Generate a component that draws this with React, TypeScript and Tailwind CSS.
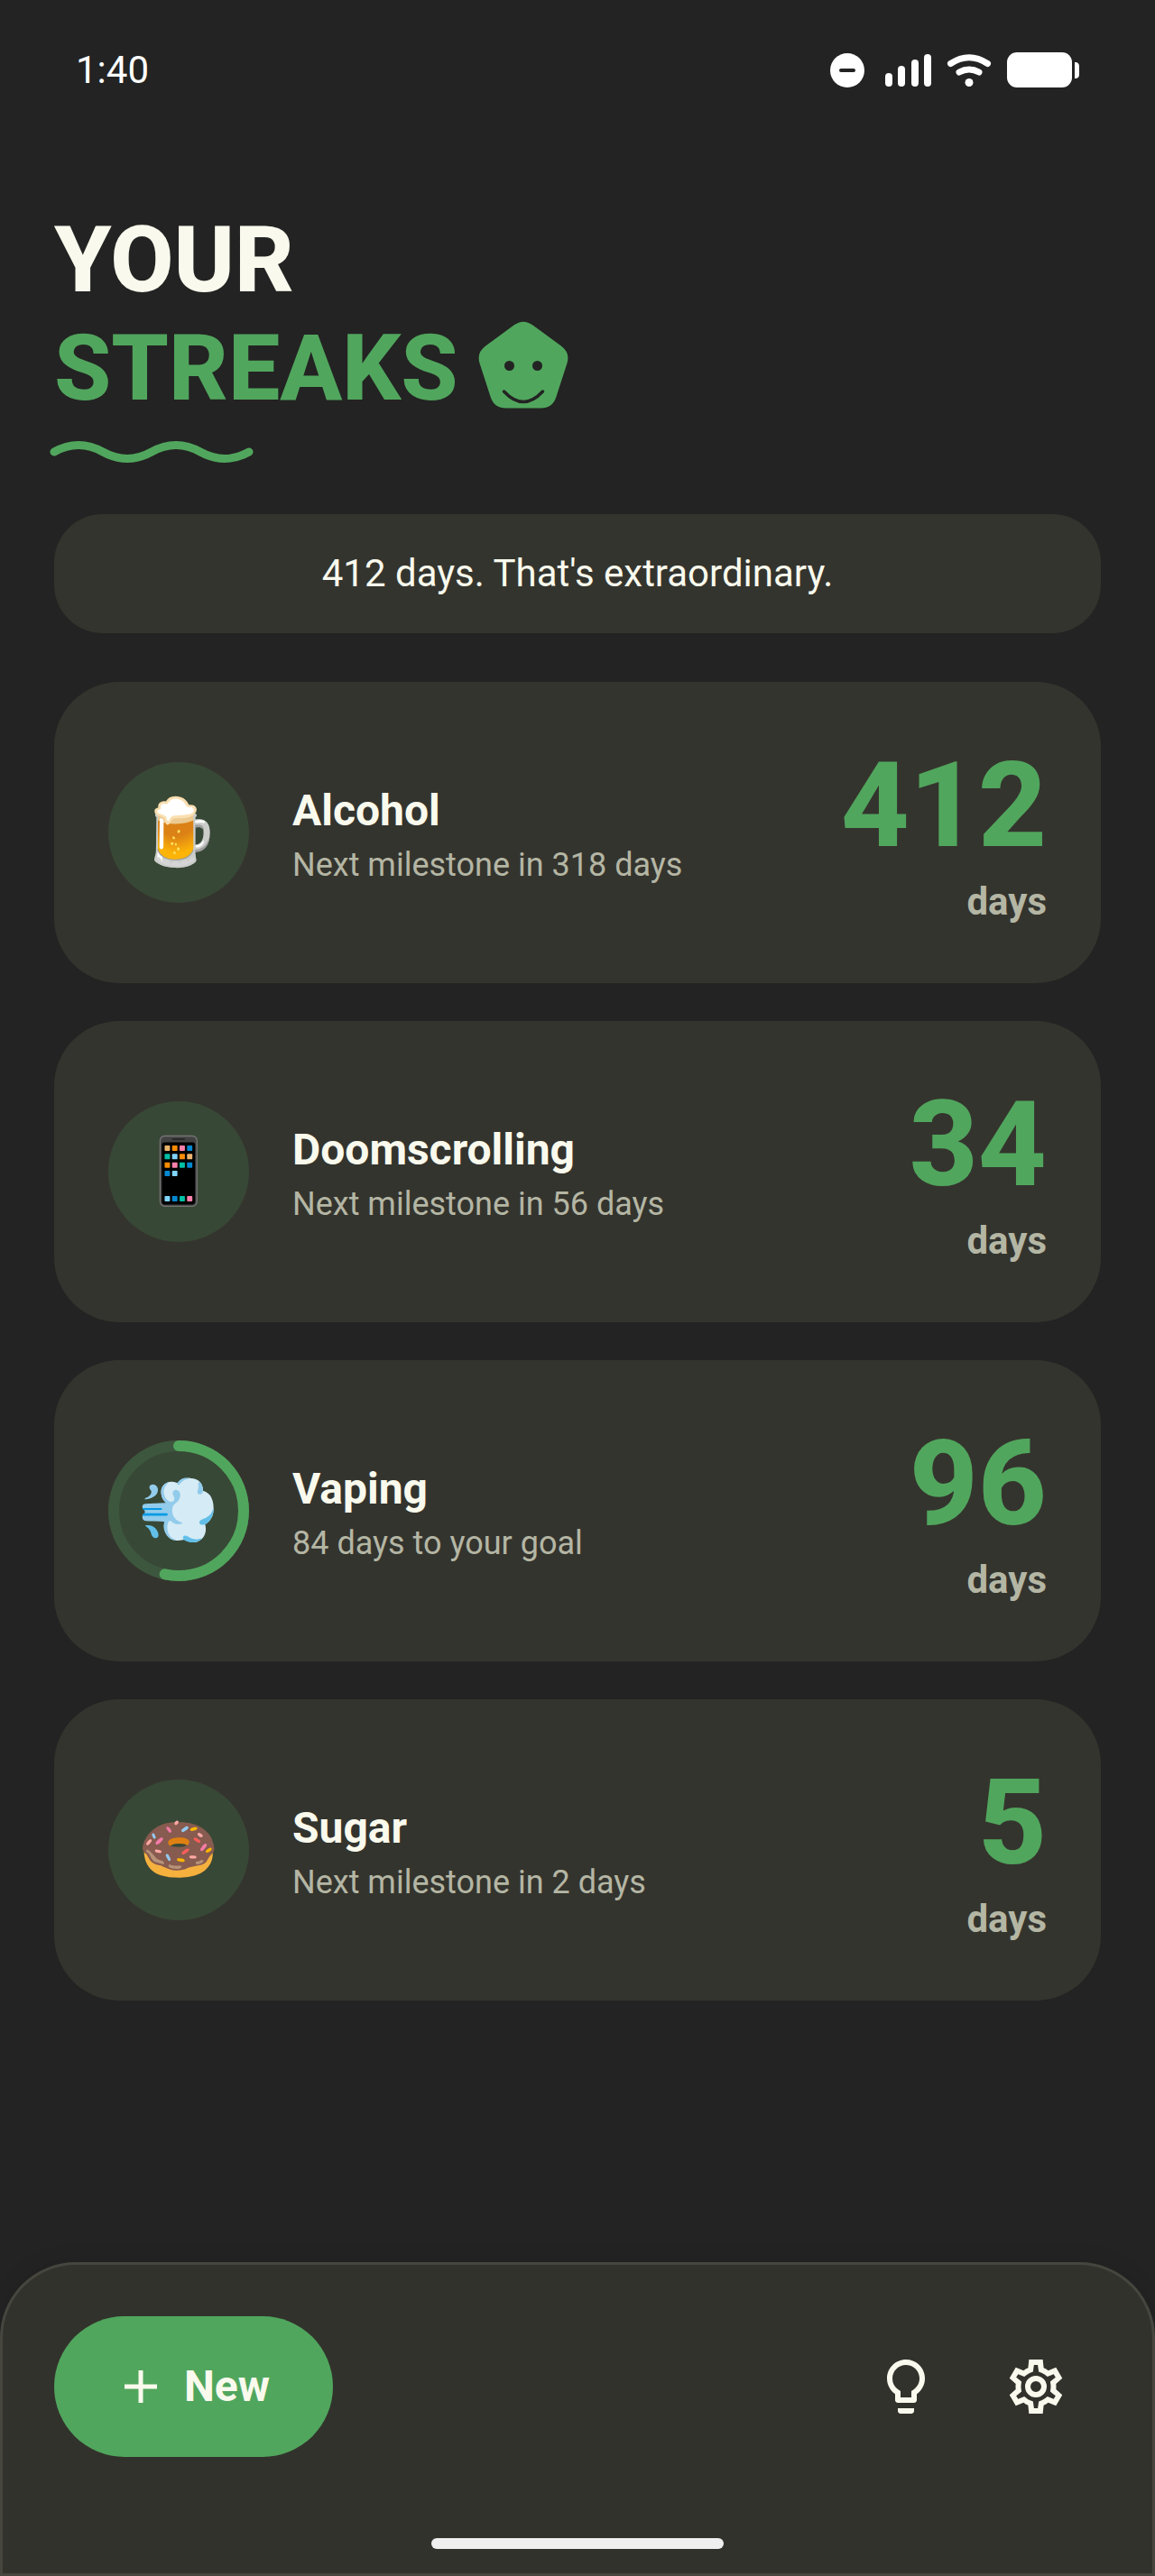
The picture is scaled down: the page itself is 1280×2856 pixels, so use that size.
type Habit = {
  name: string;
  note: string;
  days: number;
  emoji: string;
  progress?: number;
};

const habits: Habit[] = [
  { name: "Alcohol", note: "Next milestone in 318 days", days: 412, emoji: "🍺" },
  { name: "Doomscrolling", note: "Next milestone in 56 days", days: 34, emoji: "📱" },
  { name: "Vaping", note: "84 days to your goal", days: 96, emoji: "💨", progress: 96 / 180 },
  { name: "Sugar", note: "Next milestone in 2 days", days: 5, emoji: "🍩" },
];

function StatusBar() {
  return (
    <div className="flex h-39 items-center justify-between px-21 text-white">
      <span className="text-[42px] leading-none">1:40</span>
      <svg viewBox="0 0 276 40" className="h-10 w-69" fill="currentColor" aria-hidden="true">
        <circle cx="19" cy="20" r="19" />
        <path d="M12 20h14" stroke="#232323" strokeWidth="4" strokeLinecap="round" />
        <rect x="61" y="23" width="8" height="15" rx="4" />
        <rect x="75" y="15" width="8" height="23" rx="4" />
        <rect x="90" y="8" width="8" height="30" rx="4" />
        <rect x="104" y="2" width="8" height="36" rx="4" />
        <g fill="none" stroke="currentColor" strokeWidth="7" strokeLinecap="round">
          <path d="M133.5 12.5Q154 -1 174.5 12.5" />
          <path d="M143 22Q154 16 165 22" />
        </g>
        <circle cx="154" cy="33.5" r="4.5" />
        <rect x="196" y="0" width="72" height="39" rx="11" />
        <path d="M271 11c4 0 5 2 5 5v8c0 3-1 5-5 5z" />
      </svg>
    </div>
  );
}

function Face() {
  return (
    <svg viewBox="0 0 108 108" className="size-27" aria-hidden="true">
      <path
        d="M43.5 6.6Q54 -1 64.5 6.6L95.8 29.4Q106.3 37 102.3 49.3L90.3 86.2Q86.3 98.5 73.3 98.5H34.7Q21.7 98.5 17.7 86.2L5.7 49.3Q1.7 37 12.2 29.4Z"
        fill="#51a65d"
      />
      <circle cx="38.5" cy="51.5" r="5.5" fill="#232323" />
      <circle cx="69.5" cy="51.5" r="5.5" fill="#232323" />
      <path d="M32.5 80Q54 103 75.5 80" fill="none" stroke="#232323" strokeWidth="3.5" strokeLinecap="round" />
    </svg>
  );
}

function HabitIcon({ habit }: { habit: Habit }) {
  const length = 2 * Math.PI * 72;
  return (
    <div className="relative flex size-39 shrink-0 items-center justify-center rounded-full bg-[#384836]">
      {habit.progress !== undefined && (
        <svg viewBox="0 0 156 156" className="absolute inset-0 -rotate-90" fill="none" strokeWidth="12" aria-hidden="true">
          <circle cx="78" cy="78" r="72" stroke="#3d573e" />
          <circle
            cx="78"
            cy="78"
            r="72"
            stroke="#51a65d"
            strokeLinecap="round"
            strokeDasharray={`${length * habit.progress} ${length}`}
          />
        </svg>
      )}
      <span className="text-[72px] leading-none">{habit.emoji}</span>
    </div>
  );
}

function HabitCard({ habit }: { habit: Habit }) {
  return (
    <li className="flex items-center gap-12 rounded-[72px] bg-[#34342e] p-15">
      <HabitIcon habit={habit} />
      <div className="min-w-0 flex-1">
        <h2 className="text-[48px] leading-[72px] font-bold">{habit.name}</h2>
        <p className="text-[36px] leading-[48px] text-[#b4b6a4]">{habit.note}</p>
      </div>
      <div className="text-right">
        <p className="text-[132px] leading-[154px] font-extrabold text-[#51a65d]">{habit.days}</p>
        <p className="text-[42px] leading-[60px] font-bold text-[#b4b6a4]">days</p>
      </div>
    </li>
  );
}

export default function App() {
  return (
    <div className="flex min-h-screen flex-col bg-[#232323] font-[Roboto,sans-serif] text-[#f9faed]">
      <StatusBar />

      <main className="px-15 pt-18">
        <h1 className="text-[102px] leading-[120px] font-extrabold">
          YOUR
          <span className="flex items-center gap-[18px] text-[#51a65d]">
            STREAKS
            <Face />
          </span>
        </h1>
        <svg viewBox="0 0 216 36" className="mt-4 h-9 w-54 overflow-visible" aria-hidden="true">
          <path
            d="M0 17Q27 2 54 17T108 17T162 17T216 17"
            fill="none"
            stroke="#51a65d"
            strokeWidth="9"
            strokeLinecap="round"
          />
        </svg>

        <p className="mt-[50px] rounded-[54px] bg-[#34342e] py-9 text-center text-[42px] leading-[60px]">
          412 days. That's extraordinary.
        </p>

        <ul className="mt-[54px] mb-12 flex flex-col gap-[42px]">
          {habits.map((habit) => (
            <HabitCard key={habit.name} habit={habit} />
          ))}
        </ul>
      </main>

      <nav className="mt-auto rounded-t-[84px] border-3 border-[#46463f] bg-[#32322c] px-[57px] pt-[57px] pb-[27px] shadow-[0_0_24px_rgba(0,0,0,0.1)]">
        <div className="flex items-center justify-between">
          <button className="flex h-39 items-center gap-6 rounded-full bg-[#51a65d] pr-[70px] pl-[72px] text-[48px] leading-none font-bold">
            <svg viewBox="0 0 48 48" className="size-12" stroke="currentColor" strokeWidth="5" aria-hidden="true">
              <path d="M24 6v36M6 24h36" />
            </svg>
            New
          </button>
          <div className="flex">
            <button aria-label="Tips" className="flex size-36 items-center justify-center">
              <svg viewBox="0 0 24 24" className="size-18" fill="currentColor" aria-hidden="true">
                <path d="M9 21c0 .55.45 1 1 1h4c.55 0 1-.45 1-1v-1H9v1zm3-19C8.14 2 5 5.14 5 9c0 2.38 1.19 4.47 3 5.74V17c0 .55.45 1 1 1h6c.55 0 1-.45 1-1v-2.26c1.81-1.27 3-3.36 3-5.74 0-3.86-3.14-7-7-7zm2.85 11.1l-.85.6V16h-4v-2.3l-.85-.6A4.997 4.997 0 0 1 7 9c0-2.76 2.24-5 5-5s5 2.24 5 5c0 1.63-.8 3.16-2.15 4.1z" />
              </svg>
            </button>
            <button aria-label="Settings" className="flex size-36 items-center justify-center">
              <svg viewBox="0 0 24 24" className="size-18" fill="currentColor" fillRule="evenodd" aria-hidden="true">
                <path d="M9.45 2H14.55L14.87 5.07C15.48 5.32 16.04 5.66 16.56 6.05L19.43 4.93L21.75 8.95L19.43 11.02C19.47 11.34 19.5 11.66 19.5 12S19.47 12.66 19.43 12.98L21.75 15.05L19.43 19.07L16.56 17.95C16.04 18.34 15.48 18.68 14.87 18.93L14.55 22H9.45L9.13 18.93C8.52 18.68 7.96 18.34 7.44 17.95L4.57 19.07L2.25 15.05L4.57 12.98C4.53 12.66 4.5 12.34 4.5 12S4.53 11.34 4.57 11.02L2.25 8.95L4.57 4.93L7.44 6.05C7.96 5.66 8.52 5.32 9.13 5.07ZM17.45 11.27c.04.31.05.52.05.73s-.02.43-.05.73l-.14 1.13.89.7 1.08.84-.7 1.21-1.27-.51-1.04-.42-.9.68c-.43.32-.84.56-1.25.73l-1.06.43-.16 1.13-.2 1.35h-1.4l-.19-1.35-.16-1.13-1.06-.43c-.43-.18-.83-.41-1.23-.71l-.91-.7-1.06.43-1.27.51-.7-1.21 1.08-.84.89-.7-.14-1.13c-.03-.31-.05-.54-.05-.74s.02-.43.05-.73l.14-1.13-.89-.7-1.08-.84.7-1.21 1.27.51 1.04.42.9-.68c.43-.32.84-.56 1.25-.73l1.06-.43.16-1.13.2-1.35h1.39l.19 1.35.16 1.13 1.06.43c.43.18.83.41 1.23.71l.91.7 1.06-.43 1.27-.51.7 1.21-1.07.85-.89.7.14 1.13z" />
                <circle cx="12" cy="12" r="3" fill="none" stroke="currentColor" strokeWidth="2" />
              </svg>
            </button>
          </div>
        </div>
        <div className="mx-auto mt-[90px] h-3 w-81 rounded-full bg-[#efefef]" />
      </nav>
    </div>
  );
}
